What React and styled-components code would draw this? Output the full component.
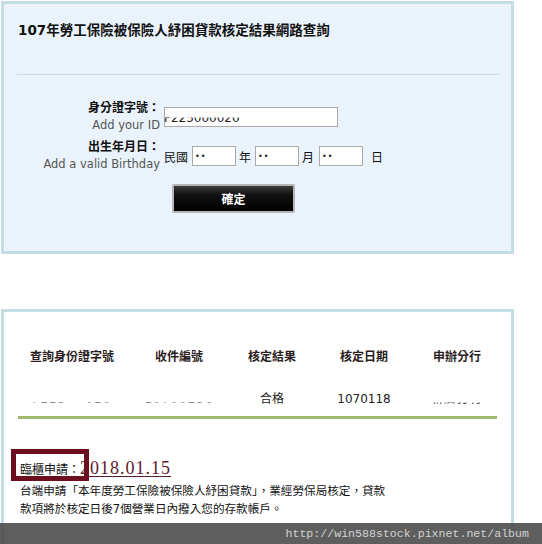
import React from 'react';
import styled, {createGlobalStyle} from 'styled-components';

const GlobalStyle = createGlobalStyle`
    html, body {
        margin: 0;
        padding: 0;
        background: #ffffff;
    }
    body {
        font-family: "DejaVu Sans", "Noto Sans CJK TC", sans-serif;
        color: #111;
        width: 542px;
        height: 544px;
        overflow: hidden;
        position: relative;
    }
`

const Page = styled.div`
    padding: 1px 0 0 1px;
    width: 513px;
`

const Panel = styled.section`
    box-sizing: border-box;
    width: 513px;
    border: 3px solid #c4dde5;
    background: ${props => props.$tint ? '#eaf3fb' : '#ffffff'};
    height: ${props => props.$height}px;
    margin-top: ${props => props.$top || 0}px;
    padding: ${props => props.$pad};
    position: relative;
`

const Title = styled.h1`
    margin: 0;
    font-size: 13.5px;
    line-height: 20px;
    font-weight: bold;
    color: #111;
`

const Divider = styled.hr`
    margin: 34px 0 0 -1px;
    width: 482px;
    border: 0;
    height: 1px;
    background: #c8dce9;
`

const Form = styled.form`
    margin-top: 25px;
    display: grid;
    grid-template-columns: 142px auto;
    column-gap: 4px;
    row-gap: 5px;
    align-items: center;
`

const LabelBlock = styled.div`
    text-align: right;
`

const Label = styled.div`
    font-size: 12px;
    font-weight: bold;
    line-height: 17px;
    color: #111;
`

const Hint = styled.div`
    font-size: 11.5px;
    line-height: 17px;
    color: #555;
    white-space: nowrap;
`

const FieldRow = styled.div`
    display: flex;
    align-items: center;
    font-size: 12px;
    color: #111;
`

const Box = styled.div`
    box-sizing: border-box;
    width: ${props => props.$w}px;
    height: 20px;
    border: 1px solid #a9a9a9;
    background: #fff;
    margin: ${props => props.$m || '0'};
    display: flex;
    align-items: center;
    font-size: 8px;
    padding-left: 2px;
    color: #222;
    letter-spacing: 1px;
`

const MaskedValue = styled.span`
    font-size: 12px;
    letter-spacing: 0;
    margin-left: -3px;
    margin-top: 1px;
    clip-path: inset(50% 0 0 0);
    color: #222;
`

const ButtonRow = styled.div`
    grid-column: 2;
    padding: 6px 0 0 8px;
`

const Button = styled.button`
    box-sizing: border-box;
    width: 123px;
    height: 29px;
    border: 2px solid #b5b5b5;
    border-radius: 2px;
    background: linear-gradient(#3c3c3c 0%, #111 35%, #000 100%);
    color: #fff;
    font-family: "DejaVu Sans", "Noto Sans CJK TC", sans-serif;
    font-size: 12px;
    font-weight: bold;
    padding: 0;
`

const Table = styled.div`
    display: grid;
    grid-template-columns: 108px 106px 80px 104px 82px;
    row-gap: 22px;
    width: 480px;
`

const HeadCell = styled.div`
    text-align: center;
    font-size: 12px;
    font-weight: bold;
    line-height: 20px;
    color: #2b1d1d;
`

const Cell = styled.div`
    text-align: center;
    font-size: 12px;
    line-height: 20px;
    color: #222;
`

const Hidden = styled.span`
    display: inline-block;
    clip-path: inset(68% 0 0 0);
    letter-spacing: 1px;
    color: #222;
`

const GreenRule = styled.div`
    margin-top: 7px;
    width: 479px;
    height: 3px;
    background: #9ebb6b;
`

const Notice = styled.div`
    margin-top: 37px;
    position: relative;
    padding-left: 2px;
    height: 24px;
    display: flex;
    align-items: center;
    font-size: 12px;
`

const DateLink = styled.span`
    font-family: "Liberation Serif", "Noto Sans CJK TC", serif;
    font-size: 18px;
    letter-spacing: 1px;
    color: #5c1a2a;
    text-decoration: underline;
    text-underline-offset: 2px;
`

const Highlight = styled.div`
    position: absolute;
    left: -7px;
    top: -7px;
    width: 78px;
    height: 32px;
    box-sizing: border-box;
    border: 5px solid #6d0e1f;
`

const Message = styled.p`
    margin: 2px 0 0 2px;
    font-size: 11.6px;
    line-height: 18px;
    color: #111;
`

const Watermark = styled.div`
    position: absolute;
    left: 0;
    bottom: 0;
    width: 542px;
    height: 21px;
    background: rgba(72, 72, 72, 0.88);
    color: #d2d2d2;
    font-family: "Liberation Mono", monospace;
    font-size: 11.6px;
    line-height: 21px;
    text-align: right;
    padding-right: 13px;
    box-sizing: border-box;
`

const columns = ['查詢身份證字號', '收件編號', '核定結果', '核定日期', '申辦分行'];

const App = () => {
    return (
        <>
            <GlobalStyle/>
            <Page>
                <Panel $tint $height={253} $pad="16px 14px 0 14px">
                    <Title>107年勞工保險被保險人紓困貸款核定結果網路查詢</Title>
                    <Divider/>
                    <Form onSubmit={e => e.preventDefault()}>
                        <LabelBlock>
                            <Label>身分證字號：</Label>
                            <Hint>Add your ID</Hint>
                        </LabelBlock>
                        <FieldRow>
                            <Box $w={174}><MaskedValue>F225000020</MaskedValue></Box>
                        </FieldRow>
                        <LabelBlock>
                            <Label>出生年月日：</Label>
                            <Hint>Add a valid Birthday</Hint>
                        </LabelBlock>
                        <FieldRow>
                            民國
                            <Box $w={44} $m="0 3px 0 4px">••</Box>
                            年
                            <Box $w={44} $m="0 3px 0 4px">••</Box>
                            月
                            <Box $w={44} $m="0 8px 0 5px">••</Box>
                            日
                        </FieldRow>
                        <ButtonRow>
                            <Button type="submit">確定</Button>
                        </ButtonRow>
                    </Form>
                </Panel>
                <Panel $top={55} $height={260} $pad="35px 14px 0 14px">
                    <Table>
                        {columns.map(c => <HeadCell key={c}>{c}</HeadCell>)}
                        <Cell><Hidden>F225&nbsp;&nbsp;&nbsp;&nbsp;020</Hidden></Cell>
                        <Cell><Hidden>10700256</Hidden></Cell>
                        <Cell>合格</Cell>
                        <Cell>1070118</Cell>
                        <Cell><Hidden>新店分行</Hidden></Cell>
                    </Table>
                    <GreenRule/>
                    <Notice>
                        <Highlight/>
                        臨櫃申請：<DateLink>2018.01.15</DateLink>
                    </Notice>
                    <Message>
                        台端申請「本年度勞工保險被保險人紓困貸款」，業經勞保局核定，貸款<br/>
                        款項將於核定日後7個營業日內撥入您的存款帳戶。
                    </Message>
                </Panel>
            </Page>
            <Watermark>http://win588stock.pixnet.net/album</Watermark>
        </>
    );
};

export default App;
